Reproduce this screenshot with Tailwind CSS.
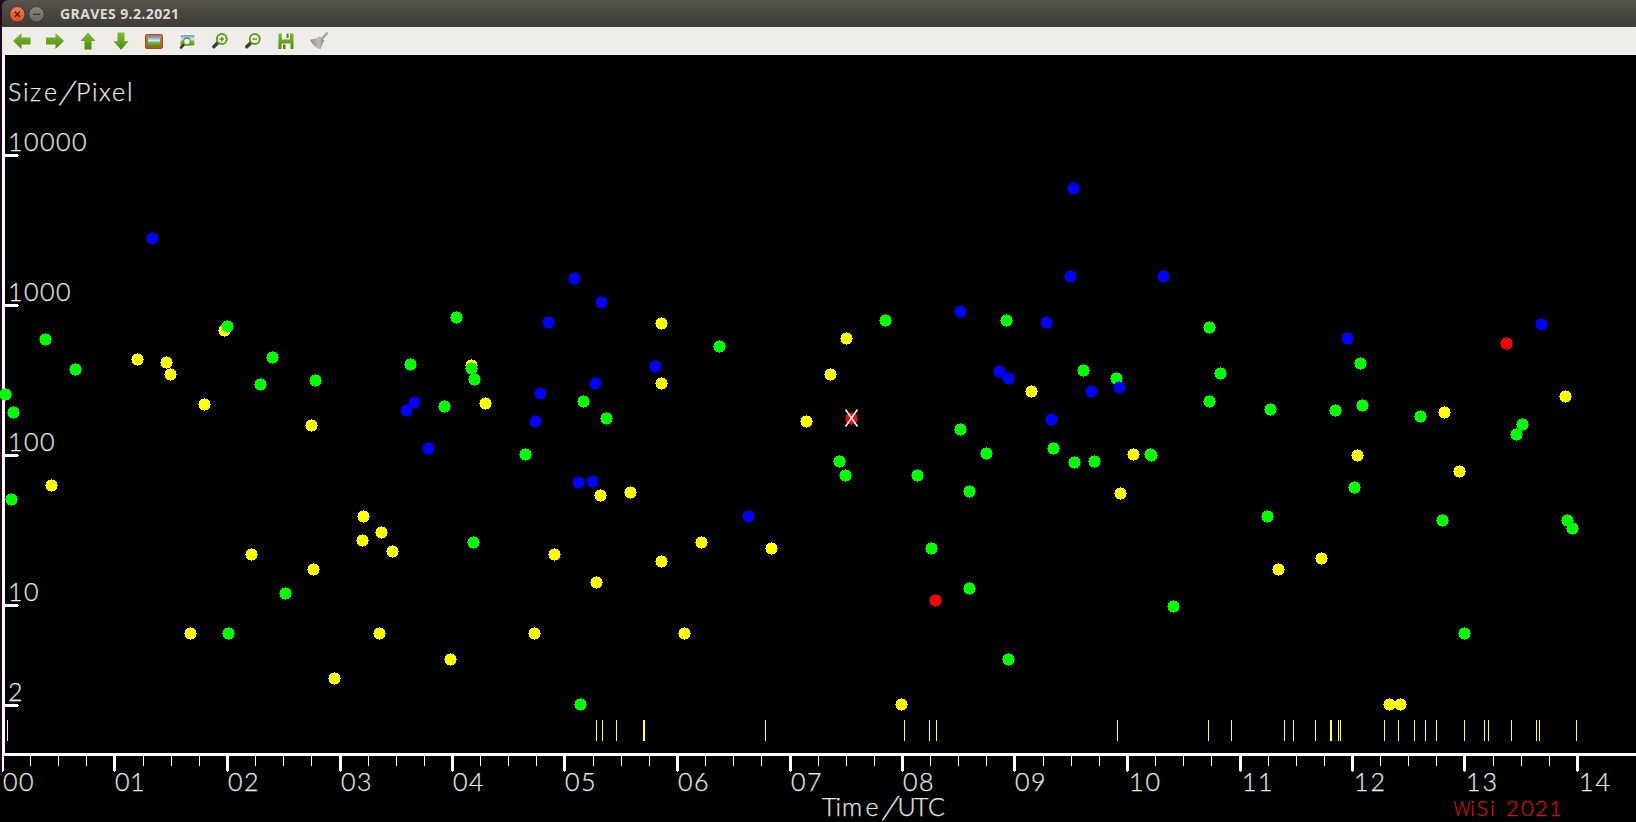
<!DOCTYPE html>
<html lang="en"><head><meta charset="utf-8"><title>GRAVES 9.2.2021</title>
<script src="https://cdn.jsdelivr.net/npm/@tailwindcss/browser@4"></script></head>
<body class="w-[1636px] h-[822px] overflow-hidden bg-black">
<main class="flex flex-col w-[1636px] h-[822px] bg-[#22071f]">
<header class="ml-[2px] h-[27px] shrink-0 rounded-tl-md bg-linear-to-b from-[#55534b] to-[#3c3b37] flex items-center">
<svg class="ml-[7px] w-[40px] h-[20px]" viewBox="9 3 40 20">
<defs><linearGradient id="cl" x1="0" y1="0" x2="0" y2="1"><stop offset="0" stop-color="#f57c55"/><stop offset="1" stop-color="#dd4a1c"/></linearGradient><linearGradient id="mn" x1="0" y1="0" x2="0" y2="1"><stop offset="0" stop-color="#8b8a84"/><stop offset="1" stop-color="#66655f"/></linearGradient></defs>
<circle cx="17.3" cy="13.300" r="7.700" fill="url(#cl)" stroke="#33322d" stroke-width=".8"/><path d="M14.800 10.800l5 5m0-5l-5 5" stroke="#45200f" stroke-width="1.400"/>
<circle cx="36.500" cy="13.300" r="7.700" fill="url(#mn)" stroke="#33322d" stroke-width=".8"/><path d="M33 13.300h7" stroke="#35342f" stroke-width="1.300"/></svg>
<h1 class="ml-[11px] pt-px font-['Open_Sans'] font-bold text-[14px] tracking-[0.4px] leading-none text-[#dfdbd2] whitespace-nowrap">GRAVES 9.2.2021</h1>
</header>
<nav class="ml-[2px] h-[28px] shrink-0 bg-[#efede7]">
<svg class="w-[340px] h-[28px]" viewBox="2 27 340 28">
<defs>
<linearGradient id="g" x1="0" y1="0" x2="0" y2="1"><stop offset="0" stop-color="#86b83c"/><stop offset="1" stop-color="#4a8a0a"/></linearGradient>
<linearGradient id="sky" x1="0" y1="0" x2="0" y2="1"><stop offset="0" stop-color="#5f93cc"/><stop offset=".45" stop-color="#dcebea"/><stop offset=".6" stop-color="#7db840"/><stop offset="1" stop-color="#4b8f12"/></linearGradient>
<linearGradient id="wd" x1="0" y1="0" x2="0" y2="1"><stop offset="0" stop-color="#c98046"/><stop offset="1" stop-color="#a35a28"/></linearGradient>
<linearGradient id="br" x1="0" y1="0" x2="1" y2="0"><stop offset="0" stop-color="#8b8b89"/><stop offset=".6" stop-color="#bdbdba"/><stop offset="1" stop-color="#8a8a88"/></linearGradient>
<g id="lens"><path d="M5.800 10.300L1.800 14.300" stroke="#3b3d39" stroke-width="3.400" stroke-linecap="round"/><circle cx="9.800" cy="6.600" r="5" fill="#f0f5e8" stroke="#609c20" stroke-width="2"/></g>
</defs>
<path d="M13 41l8.500-8v4.500h9v7h-9v4.500z" fill="url(#g)"/>
<path d="M64 41l-8.500-8v4.500h-9.500v7h9.500v4.500z" fill="url(#g)"/>
<path d="M88 32.500l7.500 8.500h-4v8.500h-7v-8.500h-4z" fill="url(#g)"/>
<path d="M121 49.800l-7.500-8.500h4v-8.800h7v8.800h4z" fill="url(#g)"/>
<rect x="145.500" y="34.500" width="17" height="14" rx="1.500" fill="url(#wd)" stroke="#9c5526"/><rect x="148" y="36.500" width="12" height="9.500" fill="url(#sky)"/>
<rect x="180" y="34.500" width="15" height="11.500" fill="url(#sky)" stroke="#f9faf7"/><path d="M184 44.500l-3 3" stroke="#3b3d39" stroke-width="2.600" stroke-linecap="round"/><circle cx="187" cy="41.500" r="3.500" fill="#eef4ea" stroke="#609c20" stroke-width="1.500"/>
<use href="#lens" x="212" y="32.500"/><path d="M219.500 39.100h4.600m-2.300-2.300v4.600" stroke="#5c981d" stroke-width="1.500"/>
<use href="#lens" x="245" y="32.500"/><path d="M252.500 39.100h4.600" stroke="#5c981d" stroke-width="1.500"/>
<path d="M278.500 33.500h14l1 1v14.500h-15z" fill="url(#g)"/><path d="M282 33h8v6.500h-8zM281.500 43.500h9v5.500h-9z" fill="#f2f1ea"/><path d="M286.500 33.500h2v4.500h-2zM283 44.500h2.500v4.500h-2.500z" fill="#4c8a10"/>
<path d="M327 33.300l-5 5.500" stroke="#a3a3a1" stroke-width="2.400" stroke-linecap="round"/><path d="M319.500 36.300l5 4.500-1.500 2-2.500 6.700c-4.500-1.500-8.500-5-10.300-9.700l7.300-1.800z" fill="url(#br)"/>
</svg></nav>
<section class="h-[767px] shrink-0">
<svg class="w-[1636px] h-[767px] block" viewBox="0 55 1636 767" shape-rendering="crispEdges" font-family="Lato, sans-serif" font-weight="300">
<defs><path id="d" d="M0-6h1v1h3v1h1v1h1v3h1v1h-1v3h-1v1h-1v1h-3v1h-1v-1h-3v-1h-1v-1h-1v-3h-1v-1h1v-3h1v-1h1v-1h3z"/></defs>
<path d="M2 55h1634v767H0v-47h2z"/>
<g id="axes" fill="#fff"><path d="M2 55h3v701h-3zM2 753h1634v3H2z"/></g>
<g id="strokes" fill="#ffff46"></g>
<g id="dots"></g>
<path d="M845.500 409.500l12 17m0-17l-12 17" stroke="#fff" stroke-width="1.500" fill="none" shape-rendering="auto"/>
<g id="labels" fill="#e8e8e8" stroke="#e8e8e8" stroke-width=".25" font-size="25"></g>
</svg></section></main>
<script>
const NS='http://www.w3.org/2000/svg';
const $=id=>document.getElementById(id);
function add(p,t,a,s){const e=document.createElementNS(NS,t);for(const k in a)e.setAttribute(k,a[k]);if(s)e.textContent=s;$(p).appendChild(e);}
const rect=(p,x,y,w,h)=>add(p,'rect',{x,y,width:w,height:h});
for(const y of [155,305,455,605,705]){rect('axes',5,y-1,13,3);rect('axes',18,y,1,1);}
const major=[2,114,227,340,452,564,677,790,902,1014,1127,1240,1352,1464,1577];
major.forEach((x,i)=>{rect('axes',i?x-1:2,756,i?3:2,15);rect('axes',x,771,1,1);
 add('labels','text',{x:[...(i<10?[x+1,x+(i==1?16:17)]:[x+2,x+(i==11?18:18.5)])].join(' '),y:791},String(i).padStart(2,'0'));});
for(const x of [30,58,86,143,171,199,255,283,311,368,396,424,480,508,536,593,621,649,705,733,761,818,846,874,930,958,986,1043,1071,1099,1155,1183,1211,1268,1296,1324,1380,1408,1436,1493,1521,1549])rect('axes',x,756,1,10);
for(const x of [7,596,602,616,643,644,765,904,929,936,1117,1208,1231,1284,1293,1315,1330,1331,1338,1340,1384,1398,1414,1425,1436,1464,1484,1488,1511,1536,1539,1576])rect('strokes',x,720,1,21);
const C={b:'#0000ff',g:'#00ff00',y:'#ffff00',r:'#ff0000'};
`b152,238 g45,339 g75,369 y137,359 y166,362 y170,374 y224,330 g227,326 g272,357 g260,384 g315,380 y204,404 y311,425 g5,394 g13,412
b574,278 b601,302 b548,322 g456,317 g410,364 y471,365 g471,368 g474,379 y485,403 g444,406 b414,402 b406,410 b428,448 b540,393 b535,421 g525,454 g583,401 b595,383 g606,418 b655,366 y661,323 y661,383 g719,346 y806,421 b578,482 b592,481 y600,495 y630,492 b748,516
b1073,188 b1070,276 b1163,276 b960,311 g885,320 g1006,320 b1046,322 g1209,327 y846,338 y830,374 b999,371 b1008,378 g1083,370 g1116,378 b1119,387 b1091,391 y1031,391 g1220,373 g1209,401 r851,418 b1051,419 g960,429 g986,453 g1053,448 g1074,462 g1094,461 y1133,454 g1150,454 g1151,455 g839,461 g845,475 g917,475 g969,491 y1120,493
b1347,338 b1541,324 r1506,343 g1360,363 g1362,405 g1335,410 g1270,409 g1420,416 y1444,412 y1565,396 g1522,424 g1516,434 y1357,455 y1459,471 g1354,487 g1267,516 g1442,520 g1567,520 g1572,528
y51,485 g11,499 y363,516 y381,532 y362,540 y392,551 y251,554 y313,569 g285,593 y190,633 g228,633 y379,633 y334,678
g473,542 y554,554 y596,582 y661,561 y701,542 y771,548 y534,633 y684,633 y450,659 g580,704
g931,548 g969,588 r935,600 g1173,606 g1008,659 y901,704 y1278,569 y1321,558 g1464,633 y1389,704 y1400,704`.split(/\s+/).forEach(s=>{const [x,y]=s.slice(1).split(',');add('dots','use',{href:'#d',x,y,fill:C[s[0]]});});
[[8,151,'10000'],[8,301,'1000'],[8,451,'100'],[8,601,'10'],[8,701,'2']].forEach(([x,y,s])=>add('labels','text',{x:[...s].map((c,i)=>x+i*16).join(' '),y},s));
const slash=x=>add('labels','text',{transform:`translate(${x} 104) skewX(-14)`,'font-size':32},'/');
add('labels','text',{x:'8 23 30 44',y:101},'Size');
add('labels','text',{transform:'translate(58 104) skewX(-14)','font-size':32},'/');
add('labels','text',{x:'76 92 99 112 127',y:101},'Pixel');
add('labels','text',{x:'822 835.5 842 865.5',y:816},'Time');
add('labels','text',{transform:'translate(881 819) skewX(-14)','font-size':32},'/');
add('labels','text',{x:'897.5 914 928',y:816},'UTC');
const red={y:816,fill:'#dc1010',stroke:'#dc1010','font-size':22};
add('labels','text',{...red,x:1453.5,textLength:17,lengthAdjust:'spacingAndGlyphs'},'W');
add('labels','text',{...red,x:'1470 1476.5 1490'},'iSi');
add('labels','text',{...red,x:'1506 1521 1535 1549'},'2021');
</script></body></html>
